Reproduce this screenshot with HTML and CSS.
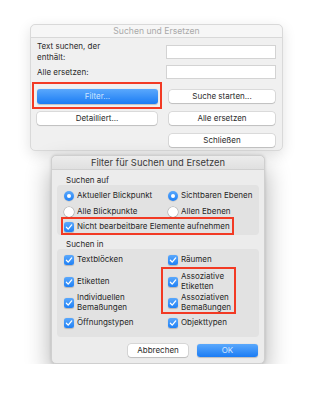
FILE: index.html
```html
<!DOCTYPE html>
<html lang="de">
<head>
    <meta charset="UTF-8">
    <meta name="viewport" content="width=device-width, initial-scale=1.0">
    <title>Suchen und Ersetzen</title>
    <link rel="stylesheet" href="styles.css">
</head>
<body>
    <div class="win win-back">
        <div class="titlebar">Suchen und Ersetzen</div>
        <div class="find-body">
            <div class="find-row row-text">
                <div class="label">Text suchen, der<br>enthält:</div>
                <div class="field"></div>
            </div>
            <div class="find-row row-replace">
                <div class="label">Alle ersetzen:</div>
                <div class="field"></div>
            </div>
            <div class="find-row row-filter">
                <div class="marked mark-filter">
                    <div class="btn btn-primary btn-wide">Filter...</div>
                </div>
                <div class="btn btn-right">Suche starten...</div>
            </div>
            <div class="find-row row-detail">
                <div class="btn btn-left">Detailliert...</div>
                <div class="btn btn-right">Alle ersetzen</div>
            </div>
            <div class="find-row row-close">
                <div></div>
                <div class="btn btn-right">Schließen</div>
            </div>
        </div>
    </div>

    <div class="win win-front">
        <div class="titlebar">Filter für Suchen und Ersetzen</div>
        <div class="filter-body">
            <div class="section-label label-first">Suchen auf</div>
            <div class="group group-scope">
                <div class="opt"><span class="radio on"></span>Aktueller Blickpunkt</div>
                <div class="opt"><span class="radio on"></span>Sichtbaren Ebenen</div>
                <div class="opt"><span class="radio"></span>Alle Blickpunkte</div>
                <div class="opt"><span class="radio"></span>Allen Ebenen</div>
                <div class="opt opt-span">
                    <div class="marked mark-locked">
                        <span class="check"><svg viewBox="0 0 10 10"><polyline points="2.4,5.3 4.2,7.1 7.7,2.9"/></svg></span>Nicht bearbeitbare Elemente aufnehmen
                    </div>
                </div>
            </div>

            <div class="section-label">Suchen in</div>
            <div class="group group-types">
                <div class="opt"><span class="check"><svg viewBox="0 0 10 10"><polyline points="2.4,5.3 4.2,7.1 7.7,2.9"/></svg></span>Textblöcken</div>
                <div class="opt"><span class="check"><svg viewBox="0 0 10 10"><polyline points="2.4,5.3 4.2,7.1 7.7,2.9"/></svg></span>Räumen</div>
                <div class="opt"><span class="check"><svg viewBox="0 0 10 10"><polyline points="2.4,5.3 4.2,7.1 7.7,2.9"/></svg></span>Etiketten</div>
                <div class="marked mark-assoc">
                    <div class="opt"><span class="check"><svg viewBox="0 0 10 10"><polyline points="2.4,5.3 4.2,7.1 7.7,2.9"/></svg></span>Assoziative<br>Etiketten</div>
                    <div class="opt"><span class="check"><svg viewBox="0 0 10 10"><polyline points="2.4,5.3 4.2,7.1 7.7,2.9"/></svg></span>Assoziativen<br>Bemaßungen</div>
                </div>
                <div class="opt"><span class="check"><svg viewBox="0 0 10 10"><polyline points="2.4,5.3 4.2,7.1 7.7,2.9"/></svg></span>Individuellen<br>Bemaßungen</div>
                <div class="opt"><span class="check"><svg viewBox="0 0 10 10"><polyline points="2.4,5.3 4.2,7.1 7.7,2.9"/></svg></span>Öffnungstypen</div>
                <div class="opt"><span class="check"><svg viewBox="0 0 10 10"><polyline points="2.4,5.3 4.2,7.1 7.7,2.9"/></svg></span>Objekttypen</div>
            </div>

            <div class="dialog-buttons">
                <div class="btn btn-cancel">Abbrechen</div>
                <div class="btn btn-primary btn-ok">OK</div>
            </div>
        </div>
    </div>
</body>
</html>
```

FILE: styles.css
```css
* {
    margin: 0;
    padding: 0;
    box-sizing: border-box;
}
body {
    background: #ffffff;
    font-family: 'Inter', 'Liberation Sans', sans-serif;
    font-size: 8px;
    color: #262626;
    padding-top: 24px;
}
.win {
    border-radius: 5px;
    overflow: visible;
}
.titlebar {
    text-align: center;
    border-radius: 5px 5px 0 0;
    border-bottom: 1px solid #d8d8d8;
}

/* back window (inactive) */
.win-back {
    width: 253px;
    height: 127px;
    margin-left: 30px;
    background: #f0f0f0;
    border: 1px solid #d9d9d9;
    box-shadow: 0 4px 14px rgba(0, 0, 0, 0.12);
}
.win-back .titlebar {
    height: 13px;
    line-height: 13px;
    font-size: 8.6px;
    color: #a9a9a9;
    background: #f6f6f6;
}
.find-body {
    display: flex;
    flex-direction: column;
    padding: 3px 6px 0;
}
.find-row {
    display: grid;
    grid-template-columns: 121px 110px;
    column-gap: 8px;
    align-items: center;
}
.row-text { height: 22px; }
.row-replace { height: 14px; margin-top: 2px; }
.row-filter { height: 15px; margin-top: 10px; }
.row-detail { height: 13px; margin-top: 8px; }
.row-close { height: 13px; margin-top: 9px; }
.label {
    line-height: 11px;
    color: #2a2a2a;
}
.field {
    height: 14px;
    background: #ffffff;
    border: 1px solid #d3d3d3;
}

/* buttons */
.btn {
    height: 13px;
    line-height: 13px;
    text-align: center;
    background: #ffffff;
    border-radius: 3px;
    color: #2a2a2a;
    box-shadow: 0 0 0 0.5px rgba(0, 0, 0, 0.18), 0 1px 1px rgba(0, 0, 0, 0.12);
}
.btn-primary {
    background: linear-gradient(#5aa8fc, #1b7cf4);
    color: #cfe4ff;
    box-shadow: 0 0.5px 1px rgba(0, 0, 0, 0.2);
}
.btn-wide {
    height: 15px;
    line-height: 15px;
}
.btn-left { margin-right: 1px; }
.btn-right { margin: 0 1px 0 3px; }

/* red annotation frames */
.marked {
    position: relative;
}
.marked::after {
    content: "";
    position: absolute;
    border: 2px solid #f23a24;
    pointer-events: none;
}
.mark-filter::after { top: -7px; bottom: -5px; left: -5px; right: -4px; }
.mark-locked::after { top: -5px; bottom: -3px; left: -3px; right: -4px; }
.mark-assoc::after { top: -4px; bottom: -1px; left: -7px; right: 23px; }

/* front window (active) */
.win-front {
    width: 214px;
    height: 209px;
    margin-top: 4px;
    margin-left: 51px;
    background: #ececec;
    border: 1px solid #cfcfcf;
    box-shadow: 0 12px 26px rgba(0, 0, 0, 0.32), 0 0 3px rgba(0, 0, 0, 0.15);
}
.win-front .titlebar {
    height: 14px;
    line-height: 14px;
    font-size: 9.4px;
    color: #3a3a3a;
    background: linear-gradient(#ececec, #e0e0e0);
    border-bottom-color: #d0d0d0;
}
.filter-body {
    padding: 0 5px;
}
.section-label {
    line-height: 9px;
    margin: 5px 0 0 9px;
}
.label-first { margin-top: 6px; }
.group {
    background: #e2e2e2;
    border-radius: 4px;
    display: grid;
    grid-template-columns: 104px 1fr;
    padding-left: 7px;
}
.group-scope {
    height: 50px;
    padding-top: 4px;
    grid-template-rows: 14px 14px 14px;
    row-gap: 1.5px;
}
.group-types {
    height: 88px;
    grid-template-rows: 22px 21px 21px 20px;
}
.opt {
    display: flex;
    align-items: center;
    line-height: 9.5px;
    white-space: nowrap;
}
.opt-span {
    grid-column: 1 / span 2;
}
.mark-locked {
    display: flex;
    align-items: center;
}
.mark-assoc {
    grid-column: 2;
    grid-row: 2 / span 2;
    display: grid;
    grid-template-rows: 21px 21px;
}
.radio, .check {
    flex: none;
    width: 10px;
    height: 10px;
    margin-right: 3px;
    position: relative;
}
.radio {
    border-radius: 50%;
    background: #ffffff;
    box-shadow: 0 0 0 0.5px rgba(0, 0, 0, 0.25), 0 0.5px 1px rgba(0, 0, 0, 0.15);
}
.radio.on {
    background: linear-gradient(#5aa8fc, #1f80f5);
    box-shadow: 0 0.5px 1px rgba(0, 0, 0, 0.2);
}
.radio.on::after {
    content: "";
    position: absolute;
    left: 3px;
    top: 3px;
    width: 4px;
    height: 4px;
    border-radius: 50%;
    background: #ffffff;
}
.check {
    border-radius: 2.5px;
    background: linear-gradient(#5aa8fc, #1f80f5);
    box-shadow: 0 0.5px 1px rgba(0, 0, 0, 0.2);
}
.check svg {
    display: block;
    width: 10px;
    height: 10px;
}
.check polyline {
    fill: none;
    stroke: #ffffff;
    stroke-width: 1.3;
    stroke-linecap: round;
    stroke-linejoin: round;
}
.dialog-buttons {
    display: flex;
    justify-content: flex-end;
    gap: 9px;
    margin-top: 7px;
    padding-right: 1px;
}
.btn-cancel { width: 60px; }
.btn-ok { width: 61px; color: #d6e8ff; }
```
